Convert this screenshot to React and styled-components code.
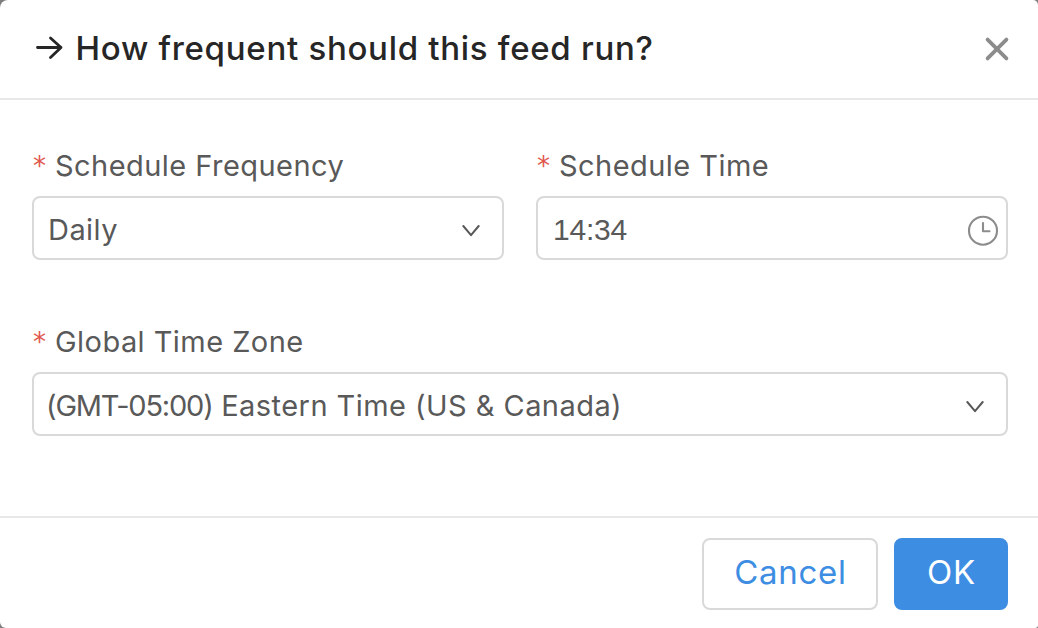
import React from "react";
import styled, { createGlobalStyle, css } from "styled-components";

const GlobalStyle = createGlobalStyle`
  *, *::before, *::after { box-sizing: border-box; }
  body {
    margin: 0;
    background: #7d7d7d;
    font-family: Inter, "Liberation Sans", sans-serif;
    color: #595959;
  }
`;

const Modal = styled.section`
  display: flex;
  flex-direction: column;
  width: 1038px;
  height: 628px;
  overflow: hidden;
  background: #fff;
  border-radius: 8px 5px 3px 6px;
`;

const Header = styled.header`
  display: flex;
  align-items: center;
  justify-content: space-between;
  height: 100px;
  padding: 0 28px 2px 32px;
  border-bottom: 2px solid #e8e8e8;
`;

const Title = styled.h1`
  display: flex;
  align-items: center;
  gap: 7.5px;
  margin: 0;
  font-size: 33px;
  font-weight: 500;
  line-height: 44px;
  letter-spacing: 0.71px;
  white-space: nowrap;
  color: #262626;
`;

const IconButton = styled.button`
  display: flex;
  padding: 2px 0 0;
  border: 0;
  background: none;
  color: #8c8c8c;
`;

const Icon = styled.svg`
  display: block;
  flex: none;
  fill: none;
  stroke: currentColor;
  stroke-linecap: round;
  stroke-linejoin: round;
`;

const Form = styled.form`
  display: grid;
  grid-template-columns: 1fr 1fr;
  gap: 64px 32px;
  align-content: start;
  flex: 1;
  padding: 48px 30px 0 32px;
`;

const Field = styled.div`
  display: flex;
  flex-direction: column;
  min-width: 0;
  ${(p) => p.$wide && css`grid-column: 1 / -1;`}
`;

const Label = styled.label`
  display: flex;
  align-items: center;
  height: 36px;
  margin-bottom: 12px;
  font-size: 29px;
  line-height: 36px;
  letter-spacing: 0.45px;
  white-space: nowrap;
`;

const Required = styled.span`
  width: 23px;
  padding: 0 0 1px 1px;
  font-family: "DejaVu Sans", sans-serif;
  font-size: 26px;
  letter-spacing: 0;
  color: #e0574b;
`;

const Control = styled.div`
  display: flex;
  align-items: center;
  justify-content: space-between;
  height: 64px;
  padding: ${(p) => (p.$time ? "4px 7px 0 15px" : "4px 21px 0 14px")};
  border: 2px solid #d9d9d9;
  border-radius: 8px;
  font-size: 29px;
  line-height: 36px;
  white-space: nowrap;
`;

const Value = styled.span`
  letter-spacing: 0.45px;
`;

const Time = styled.span`
  font-family: "Liberation Sans", sans-serif;
  font-size: 30px;
  letter-spacing: -0.2px;
`;

const Offset = styled.span`
  margin-left: -2px;
  font-feature-settings: "calt" 0;
  letter-spacing: -1.2px;
`;

const Footer = styled.footer`
  display: flex;
  justify-content: flex-end;
  gap: 16px;
  height: 112px;
  padding: 20px 30px 0;
  border-top: 2px solid #e8e8e8;
`;

const Button = styled.button`
  width: ${(p) => (p.$primary ? 114 : 176)}px;
  height: 72px;
  padding: 0 0 4px 1px;
  border: 2px solid ${(p) => (p.$primary ? "#3d8de3" : "#d9d9d9")};
  border-radius: 8px;
  background: ${(p) => (p.$primary ? "#3d8de3" : "#fff")};
  color: ${(p) => (p.$primary ? "#fff" : "#3d8de3")};
  font: 400 33px/40px Inter, "Liberation Sans", sans-serif;
  letter-spacing: 0.7px;
`;

const ArrowRight = () => (
  <Icon width="36" height="32" viewBox="0 0 36 32" strokeWidth="2.8" aria-hidden="true">
    <path d="M5.5 15.5H29M18.5 6L29 15.5L18.5 25.5" />
  </Icon>
);

const Chevron = () => (
  <Icon width="20" height="16" viewBox="0 0 20 16" strokeWidth="2" aria-hidden="true">
    <path d="M2.3 4L10 13.2L17.7 4" />
  </Icon>
);

const Close = () => (
  <Icon width="26" height="26" viewBox="0 0 26 26" strokeWidth="3.8" aria-hidden="true">
    <path d="M3.6 3.6L22.4 22.4M22.4 3.6L3.6 22.4" />
  </Icon>
);

const ClockIcon = styled(Icon)`
  color: #8c8c8c;
`;

const Clock = () => (
  <ClockIcon width="32" height="32" viewBox="0 0 32 32" strokeWidth="2.1" aria-hidden="true">
    <circle cx="16" cy="16.7" r="14" />
    <path d="M16 9V17.3H22.5" />
  </ClockIcon>
);

export default function App() {
  return (
    <>
      <GlobalStyle />
      <Modal role="dialog">
        <Header>
          <Title>
            <ArrowRight />
            <span>How frequent should this feed run?</span>
          </Title>
          <IconButton aria-label="Close">
            <Close />
          </IconButton>
        </Header>
        <Form>
          <Field>
            <Label>
              <Required>*</Required>
              <span>Schedule Frequency</span>
            </Label>
            <Control>
              <Value>Daily</Value>
              <Chevron />
            </Control>
          </Field>
          <Field>
            <Label>
              <Required>*</Required>
              <span>Schedule Time</span>
            </Label>
            <Control $time>
              <Time>14:34</Time>
              <Clock />
            </Control>
          </Field>
          <Field $wide>
            <Label>
              <Required>*</Required>
              <span>Global Time Zone</span>
            </Label>
            <Control>
              <Value>
                <Offset>(GMT-05:00)</Offset> Eastern Time (US &amp; Canada)
              </Value>
              <Chevron />
            </Control>
          </Field>
        </Form>
        <Footer>
          <Button>Cancel</Button>
          <Button $primary>OK</Button>
        </Footer>
      </Modal>
    </>
  );
}
